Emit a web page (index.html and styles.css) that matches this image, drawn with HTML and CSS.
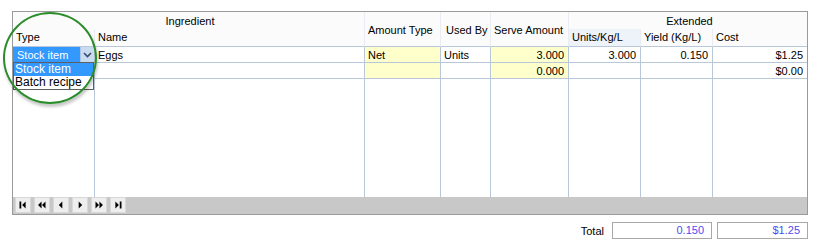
FILE: index.html
```html
<!DOCTYPE html>
<html lang="en">
<head>
<meta charset="UTF-8" />
<title>Recipe ingredients</title>
<link rel="stylesheet" href="styles.css">
</head>
<body>
<div class="page">
  <div class="grid-wrap">
    <div class="grid">
      <!-- header row 1 -->
      <div class="hd group ingredient">Ingredient</div>
      <div class="hd tall c3">Amount Type</div>
      <div class="hd tall c4 used">Used By</div>
      <div class="hd tall c5">Serve Amount</div>
      <div class="hd group extended">Extended</div>
      <!-- header row 2 -->
      <div class="hd sub c1">Type</div>
      <div class="hd sub c2">Name</div>
      <div class="hd sub c6 hover">Units/Kg/L</div>
      <div class="hd sub c7">Yield (Kg/L)</div>
      <div class="hd sub c8 last">Cost</div>

      <!-- row 1 -->
      <div class="cell combo-cell">
        <div class="combo">
          <span class="combo-text">Stock item</span>
          <span class="combo-btn">
            <svg width="9" height="6" viewBox="0 0 9 6"><path d="M1 1 L4.5 4.5 L8 1" fill="none" stroke="#3a4a6a" stroke-width="1.6"/></svg>
          </span>
        </div>
      </div>
      <div class="cell">Eggs</div>
      <div class="cell edit">Net</div>
      <div class="cell">Units</div>
      <div class="cell edit num">3.000</div>
      <div class="cell num">3.000</div>
      <div class="cell num">0.150</div>
      <div class="cell num last">$1.25</div>

      <!-- row 2 -->
      <div class="cell"></div>
      <div class="cell"></div>
      <div class="cell edit"></div>
      <div class="cell"></div>
      <div class="cell edit num">0.000</div>
      <div class="cell num"></div>
      <div class="cell num"></div>
      <div class="cell num last">$0.00</div>

      <!-- empty space down to the navigator -->
      <div class="fill"></div>
      <div class="fill"></div>
      <div class="fill"></div>
      <div class="fill"></div>
      <div class="fill"></div>
      <div class="fill"></div>
      <div class="fill"></div>
      <div class="fill last"></div>
    </div>

    <div class="navbar">
      <button class="nav-btn" aria-label="First">
        <svg width="16" height="16" viewBox="0 0 16 16"><rect x="4" y="4" width="2" height="8"/><path d="M11 4 L7 8 L11 12 Z"/></svg>
      </button>
      <button class="nav-btn" aria-label="Previous page">
        <svg width="16" height="16" viewBox="0 0 16 16"><path d="M7.5 4 L3.5 8 L7.5 12 Z"/><path d="M12 4 L8 8 L12 12 Z"/></svg>
      </button>
      <button class="nav-btn" aria-label="Previous">
        <svg width="16" height="16" viewBox="0 0 16 16"><path d="M9.5 4 L5.5 8 L9.5 12 Z"/></svg>
      </button>
      <button class="nav-btn" aria-label="Next">
        <svg width="16" height="16" viewBox="0 0 16 16"><path d="M6.5 4 L10.5 8 L6.5 12 Z"/></svg>
      </button>
      <button class="nav-btn" aria-label="Next page">
        <svg width="16" height="16" viewBox="0 0 16 16"><path d="M4 4 L8 8 L4 12 Z"/><path d="M8.5 4 L12.5 8 L8.5 12 Z"/></svg>
      </button>
      <button class="nav-btn" aria-label="Last">
        <svg width="16" height="16" viewBox="0 0 16 16"><path d="M5 4 L9 8 L5 12 Z"/><rect x="10" y="4" width="2" height="8"/></svg>
      </button>
    </div>

    <!-- open dropdown of the Type combo -->
    <ul class="dropdown">
      <li class="selected">Stock item</li>
      <li>Batch recipe</li>
    </ul>

    <!-- highlight ring -->
    <div class="ring"></div>
  </div>

  <div class="totals">
    <span class="total-label">Total</span>
    <div class="total-box wide">0.150</div>
    <div class="total-box">$1.25</div>
  </div>
</div>
</body>
</html>
```

FILE: styles.css
```css
:root {
  --line: #b9c8d8;
  --head-line: #e9edf1;
  --frame: #9a9a9a;
  --edit: #ffffcc;
  --select: #3399ff;
  --total-text: #4c4cf2;
}

* {
  box-sizing: border-box;
}

body {
  margin: 0;
  background: #ffffff;
  color: #000000;
  font-family: "Liberation Sans", Arial, sans-serif;
  font-size: 11px;
}

.page {
  width: 819px;
  padding: 11px 12px 0 12px;
}

/* Grid frame */
.grid-wrap {
  position: relative;
  width: 796px;
  border: 1px solid var(--frame);
}

.grid {
  display: grid;
  grid-template-columns: 82px 270px 76px 50px 78px 72px 72px 94px;
  grid-template-rows: 17px 18px 16px 16px 118px;
}

/* Header */
.hd {
  background: #fbfbfb;
  border-right: 1px solid var(--head-line);
  display: flex;
  align-items: center;
  padding-left: 3px;
  white-space: nowrap;
}
.hd.group {
  grid-row: 1;
  justify-content: center;
  padding-top: 1px;
}
.ingredient {
  grid-column: 1 / 3;
}
.extended {
  grid-column: 6 / 9;
  border-right: none;
}
.hd.tall {
  grid-row: 1 / 3;
  border-bottom: 1px solid var(--line);
  padding-top: 1px;
}
.hd.sub {
  grid-row: 2;
  border-bottom: 1px solid var(--line);
  padding-bottom: 1px;
}
.c1 { grid-column: 1; }
.c2 { grid-column: 2; }
.c3 { grid-column: 3; }
.c4 { grid-column: 4; }
.c5 { grid-column: 5; }
.c6 { grid-column: 6; }
.c7 { grid-column: 7; }
.c8 { grid-column: 8; }

.hd.used {
  padding-left: 5px;
}
.hd.hover {
  background: #eef3fa;
}
.hd.last {
  border-right: none;
}

/* Body cells */
.cell {
  border-right: 1px solid var(--line);
  border-bottom: 1px solid var(--line);
  display: flex;
  align-items: center;
  padding: 0 3px;
  white-space: nowrap;
}
.cell.edit {
  background: var(--edit);
}
.cell.num {
  justify-content: flex-end;
  padding-right: 4px;
}
.cell.last,
.fill.last {
  border-right: none;
}
.fill {
  border-right: 1px solid var(--line);
}

/* Type combo */
.cell.combo-cell {
  grid-column: 1;
  grid-row: 3;
  padding: 0;
  align-items: stretch;
}
.combo {
  display: flex;
  width: 100%;
}
.combo-text {
  flex: 1;
  background: var(--select);
  color: #ffffff;
  padding-left: 4px;
  display: flex;
  align-items: center;
}
.combo-btn {
  width: 14px;
  background: #c9dbf1;
  border-left: 1px solid #aac4e4;
  display: flex;
  align-items: center;
  justify-content: center;
}

.dropdown {
  position: absolute;
  left: 0;
  top: 50px;
  width: 81px;
  margin: 0;
  padding: 0;
  list-style: none;
  background: #ffffff;
  border: 1px solid #5f5f5f;
  z-index: 2;
}
.dropdown li {
  height: 13px;
  line-height: 13px;
  padding-left: 1px;
  font-size: 12px;
}
.dropdown li.selected {
  background: var(--select);
  color: #ffffff;
}

.ring {
  position: absolute;
  left: -10px;
  top: 0;
  width: 94px;
  height: 92px;
  border: 2px solid #2b8c2b;
  border-radius: 50%;
  box-shadow: 1px 3px 3px rgba(0, 0, 0, 0.22);
  pointer-events: none;
  z-index: 3;
}

/* Navigator */
.navbar {
  display: flex;
  gap: 3px;
  height: 17px;
  padding: 0 0 0 2px;
  background: #c8c8c8;
}
.nav-btn {
  width: 16px;
  height: 16px;
  margin: 0;
  padding: 0;
  border: 1px solid #d8d8d8;
  background: #eeeeee;
  display: flex;
  align-items: center;
  justify-content: center;
}
.nav-btn svg {
  display: block;
  fill: #000000;
}

/* Totals */
.totals {
  display: flex;
  justify-content: flex-end;
  align-items: center;
  gap: 5px;
  margin-top: 7px;
  width: 796px;
}
.total-label {
  margin-right: 3px;
}
.total-box {
  width: 91px;
  height: 17px;
  border: 1px solid #a8a8a8;
  color: var(--total-text);
  text-align: right;
  padding-right: 7px;
  line-height: 15px;
}
.total-box.wide {
  width: 100px;
}
```
